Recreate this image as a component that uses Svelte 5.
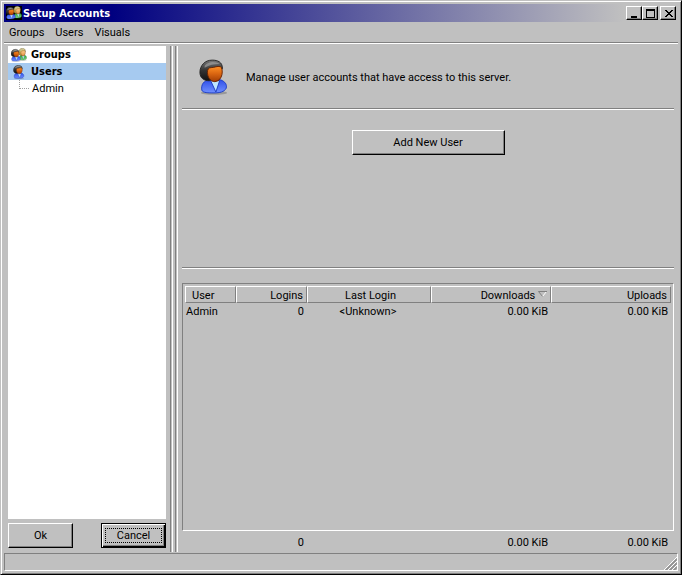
<script>
  const menus = ['Groups', 'Users', 'Visuals'];
  const columns = [
    { title: 'User', align: 'left' },
    { title: 'Logins', align: 'right' },
    { title: 'Last Login', align: 'center' },
    { title: 'Downloads', align: 'right' },
    { title: 'Uploads', align: 'right' },
  ];
  let sortBy = $state('Downloads');
  let selected = $state('Users');
  let users = $state([['Admin', '0', '<Unknown>', '0.00 KiB', '0.00 KiB']]);
  let totals = ['', '0', '', '0.00 KiB', '0.00 KiB'];
</script>

{#snippet person(hair, face, coat, edge)}
  <ellipse cx="16" cy="36" rx="14" ry="2" fill="#000" opacity=".2" />
  <path d="M3 33c-1-6 2-10 8-11h12c5 2 7 5 6 9-2 4-7 5-13 5-6 0-12 0-13-3z" fill="url(#{coat})" stroke={edge} />
  <path d="M12 22l6 13 4-12z" fill="#bfe6ff" stroke={edge} />
  <path d="M14 1C6 1 1 7 1 14c0 6 4 9 10 9l8-5 6-8C25 3 20 1 14 1z" fill="url(#{hair})" stroke="#222" />
  <path d="M9 14c0-3 1-5 4-5 4 0 6-2 10-1 3 2 3 15-6 16-5 0-8-5-8-10z" fill="url(#{face})" stroke="#6b2200" />
  <path d="M6 7c4-5 11-5 16-2-6 0-11 1-16 4z" fill="#aaa" opacity=".6" />
{/snippet}

{#snippet pair()}
  <svg class="pair" viewBox="0 0 48 42" aria-hidden="true">
    <g transform="translate(22 0) scale(.85 1)">{@render person('blond', 'pale', 'green', '#208030')}</g>
    <g transform="translate(-1 3)">{@render person('black', 'tan', 'blue', '#1c3cc0')}</g>
  </svg>
{/snippet}

<svg class="defs" aria-hidden="true">
  <defs>
    <linearGradient id="black" x1="0" y1="0" x2="0" y2="1">
      <stop offset="0" stop-color="#777" /><stop offset=".5" stop-color="#333" /><stop offset="1" stop-color="#111" />
    </linearGradient>
    <linearGradient id="blond" x1="0" y1="0" x2="0" y2="1">
      <stop offset="0" stop-color="#f4e48c" /><stop offset="1" stop-color="#a88c30" />
    </linearGradient>
    <linearGradient id="tan" x1="0" y1="0" x2="0" y2="1">
      <stop offset="0" stop-color="#ff9024" /><stop offset=".5" stop-color="#d86410" /><stop offset="1" stop-color="#a03c04" />
    </linearGradient>
    <linearGradient id="pale" x1="0" y1="0" x2="0" y2="1">
      <stop offset="0" stop-color="#ffd08c" /><stop offset="1" stop-color="#e09040" />
    </linearGradient>
    <linearGradient id="blue" x1="0" y1="0" x2="0" y2="1">
      <stop offset="0" stop-color="#3050e8" /><stop offset="1" stop-color="#7090ff" />
    </linearGradient>
    <linearGradient id="green" x1="0" y1="0" x2="0" y2="1">
      <stop offset="0" stop-color="#30a040" /><stop offset="1" stop-color="#80d880" />
    </linearGradient>
  </defs>
</svg>

<div class="window">
  <header class="titlebar">
    {@render pair()}
    <h1>Setup Accounts</h1>
    <button class="box" aria-label="Minimize">
      <svg viewBox="0 0 12 10"><path d="M2 7h6v2H2z" /></svg>
    </button>
    <button class="box" aria-label="Maximize">
      <svg viewBox="0 0 12 10"><path d="M1 0h9v9H1zM2 2v6h7V2z" fill-rule="evenodd" /></svg>
    </button>
    <button class="box close" aria-label="Close">
      <svg viewBox="0 0 12 10"><path d="M2 1h2v1h1v1h2V2h1V1h2v1H9v1H8v1H7v1h1v1h1v1h1v1H8V7H7V6H5v1H4v1H2V7h1V6h1V5h1V4H4V3H3V2H2z" /></svg>
    </button>
  </header>

  <nav class="menubar">
    {#each menus as menu}
      <button>{menu}</button>
    {/each}
  </nav>

  <div class="body">
    <aside>
      <div class="tree">
        <button class="node" class:selected={selected === 'Groups'} onclick={() => (selected = 'Groups')}>
          <span class="icon">{@render pair()}</span>Groups
        </button>
        <button class="node" class:selected={selected === 'Users'} onclick={() => (selected = 'Users')}>
          <span class="icon">
            <svg class="single" viewBox="0 0 32 38" aria-hidden="true">
              {@render person('black', 'tan', 'blue', '#1c3cc0')}
            </svg>
          </span>Users
        </button>
        {#each users as user}
          <button class="node leaf" class:selected={selected === user[0]} onclick={() => (selected = user[0])}>
            <span class="branch"></span>{user[0]}
          </button>
        {/each}
      </div>
      <div class="actions">
        <button class="push">Ok</button>
        <button class="push default"><span>Cancel</span></button>
      </div>
    </aside>

    <div class="splitter"></div>

    <main>
      <section class="intro">
        <svg class="portrait" viewBox="0 0 32 38" aria-hidden="true">
          {@render person('black', 'tan', 'blue', '#1c3cc0')}
        </svg>
        <p>Manage user accounts that have access to this server.</p>
      </section>
      <section class="add">
        <button class="push wide">Add New User</button>
      </section>
      <div class="list">
        <table>
          <colgroup>
            <col class="c-user" /><col class="c-logins" /><col class="c-last" /><col /><col />
          </colgroup>
          <thead>
            <tr>
              {#each columns as col}
                <th class={col.align} onclick={() => (sortBy = col.title)}>
                  {col.title}
                  {#if sortBy === col.title}
                    <svg class="sort" viewBox="0 0 9 6" aria-hidden="true">
                      <path d="M8.500.5l-4 5" stroke="#fff" /><path d="M9 .5H.5l4 5" stroke="#808080" />
                    </svg>
                  {/if}
                </th>
              {/each}
            </tr>
          </thead>
          <tbody>
            {#each users as user}
              <tr>
                {#each user as cell, i}
                  <td class={columns[i].align}>{cell}</td>
                {/each}
              </tr>
            {/each}
          </tbody>
        </table>
      </div>
      <div class="totals">
        {#each totals as total, i}
          <span class={columns[i].align}>{total}</span>
        {/each}
      </div>
    </main>
  </div>

  <footer class="status">
    <svg class="grip" viewBox="0 0 13 13" aria-hidden="true">
      <path d="M0 13L13 0M4 13l9-9M8 13l5-5" stroke="#fff" />
      <path d="M1.500 13L13 1.500M2.500 13L13 2.500M5.500 13L13 5.500M6.500 13L13 6.500M9.500 13L13 9.500M10.500 13l2.500-2.500" stroke="#808080" />
    </svg>
  </footer>
</div>

<style>
  :global(body) {
    margin: 0;
    background: #c0c0c0;
  }
  .defs {
    position: absolute;
    width: 0;
    height: 0;
  }
  .window {
    box-sizing: border-box;
    min-height: 100vh;
    display: flex;
    flex-direction: column;
    padding: 2px;
    background: #c0c0c0;
    border: 1px solid;
    border-color: #c0c0c0 #000 #000 #c0c0c0;
    box-shadow: inset 1px 1px #fff, inset -1px -1px #808080;
    font: 11px/13px Roboto, 'DejaVu Sans Condensed', sans-serif;
    color: #000;
  }
  button {
    font: inherit;
    color: inherit;
    margin: 0;
    padding: 0;
    border: 0;
    background: none;
    border-radius: 0;
  }
  .titlebar {
    display: flex;
    align-items: center;
    height: 18px;
    margin: 1px 1px 0;
    padding: 0 2px;
    background: linear-gradient(90deg, #000080 16%, #c0c0c0 92%);
  }
  .pair {
    width: 16px;
    height: 14px;
    flex: none;
  }
  .titlebar .pair {
    background: #000;
  }
  h1 {
    flex: 1;
    margin: 0 1px;
    font: bold 11px/13px 'DejaVu Sans Condensed', sans-serif;
    color: #fff;
  }
  .box {
    box-sizing: border-box;
    display: flex;
    width: 16px;
    height: 14px;
    padding: 2px;
    background: #c0c0c0;
    border: 1px solid;
    border-color: #fff #000 #000 #fff;
    box-shadow: inset -1px -1px #808080;
  }
  .box svg {
    width: 12px;
    height: 10px;
    flex: none;
    shape-rendering: crispEdges;
  }
  .close {
    margin-left: 2px;
  }
  .menubar {
    display: flex;
    gap: 11px;
    height: 20px;
    margin: 0 1px;
    padding: 0 5px;
    border-bottom: 1px solid #808080;
    box-shadow: 0 1px #fff;
  }
  .body {
    flex: 1;
    display: flex;
    margin-top: 3px;
    padding: 0 5px;
  }
  aside {
    display: flex;
    flex-direction: column;
    width: 158px;
  }
  .tree {
    flex: 1;
    background: #fff;
  }
  .node {
    display: flex;
    align-items: center;
    width: 100%;
    height: 17px;
    font: bold 11px/13px 'DejaVu Sans Condensed', sans-serif;
  }
  .leaf {
    font: inherit;
  }
  .selected {
    background: #a6caf0;
  }
  .icon {
    display: flex;
    width: 16px;
    margin: 0 4px 0 3px;
  }
  .single {
    width: 12px;
    height: 14px;
    margin-left: 2px;
  }
  .branch {
    align-self: flex-start;
    width: 9px;
    height: 8px;
    margin: 0 3px 0 11px;
    border: dotted #a0a0a0;
    border-width: 0 0 1px 1px;
  }
  .actions {
    display: flex;
    justify-content: space-between;
    padding: 4px 0;
  }
  .push {
    box-sizing: border-box;
    width: 65px;
    height: 25px;
    border: 1px solid;
    border-color: #fff #000 #000 #fff;
    box-shadow: inset -1px -1px #808080;
  }
  .default {
    padding: 3px;
    border-color: #000;
    box-shadow: inset 1px 1px #fff, inset -1px -1px #000, inset -2px -2px #808080;
  }
  .default span {
    display: block;
    border: 1px dotted #000;
  }
  .splitter {
    display: flex;
    gap: 2px;
    margin: 0 4px;
  }
  .splitter::before,
  .splitter::after {
    content: '';
    width: 1px;
    border: solid;
    border-width: 0 1px;
    border-color: #808080 #fff #fff #808080;
  }
  main {
    flex: 1;
    min-width: 0;
    display: flex;
    flex-direction: column;
  }
  .intro,
  .add {
    border-bottom: 1px solid #808080;
    box-shadow: 0 1px #fff;
  }
  .intro {
    display: flex;
    align-items: center;
    gap: 17px;
    height: 62px;
    padding-left: 17px;
  }
  .portrait {
    width: 30px;
    height: 38px;
  }
  p {
    margin: 0;
  }
  .add {
    height: 137px;
    padding-top: 21px;
    text-align: center;
  }
  .wide {
    width: 153px;
  }
  .list {
    flex: 1;
    margin-top: 15px;
    padding: 2px;
    border: 1px solid;
    border-color: #808080 #fff #fff #808080;
  }
  table {
    width: 100%;
    table-layout: fixed;
    border-collapse: separate;
    border-spacing: 0;
  }
  th {
    height: 15px;
    padding: 0 3px 0 6px;
    border: 1px solid;
    border-color: #fff #808080 #808080 #fff;
    font-weight: normal;
    vertical-align: bottom;
  }
  td {
    padding: 2px 3px 0 1px;
  }
  .left {
    text-align: left;
  }
  .right {
    text-align: right;
  }
  .center {
    text-align: center;
  }
  .sort {
    width: 9px;
    height: 6px;
    fill: none;
    vertical-align: 2px;
  }
  .c-user {
    width: 51px;
  }
  .c-logins {
    width: 71px;
  }
  .c-last {
    width: 124px;
  }
  .totals {
    display: grid;
    grid-template-columns: 51px 71px 124px 1fr 1fr;
    padding: 5px 6px 3px 0;
  }
  .status {
    display: flex;
    justify-content: flex-end;
    align-items: flex-end;
    height: 16px;
    margin: 1px;
    border: 1px solid;
    border-color: #808080 #fff #fff #808080;
  }
  .grip {
    width: 13px;
    height: 13px;
  }
</style>
